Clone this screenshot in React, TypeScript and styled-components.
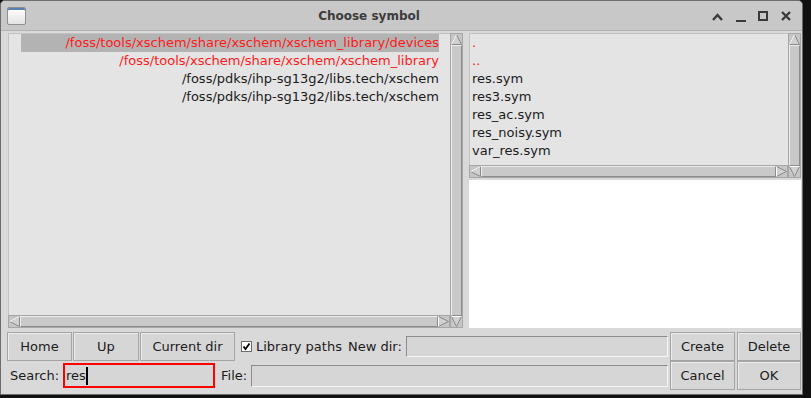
import React from "react";
import styled, { createGlobalStyle } from "styled-components";

const GlobalStyle = createGlobalStyle`
  html, body {
    margin: 0;
    padding: 0;
    background: #111111;
  }
  body {
    font-family: "DejaVu Sans", "Liberation Sans", sans-serif;
    font-size: 13px;
    color: #1b1b1b;
  }
`;

const Window = styled.div`
  width: 803px;
  height: 395px;
  box-sizing: border-box;
  border: 1px solid #6c6c6c;
  border-radius: 5px 5px 0 0;
  background: #d9d9d9;
  display: flex;
  flex-direction: column;
  overflow: hidden;
`;

const TitleBar = styled.div`
  flex: 0 0 29px;
  background: #c8c8c8;
  border-bottom: 1px solid #b2b2b2;
  display: flex;
  align-items: center;
  padding: 0 4px 0 6px;
`;

const AppIcon = styled.div`
  width: 17px;
  height: 16px;
  border: 1px solid #8e8e8e;
  border-radius: 2px;
  background: linear-gradient(#ffffff, #e3e3e3);
  box-shadow: inset 0 2px 0 #5a7fb5, inset 0 3px 0 #ffffff;
`;

const Title = styled.div`
  flex: 1;
  text-align: center;
  font-weight: bold;
  font-size: 12px;
  color: #3c3c3c;
  padding-left: 6px;
`;

const Controls = styled.div`
  display: flex;
  align-items: center;
`;

const ControlButton = styled.svg`
  width: 23px;
  height: 14px;
  display: block;
`;

const Body = styled.div`
  flex: 1;
  display: flex;
  flex-direction: column;
  padding: 2px 1px 4px 7px;
  background: #d9d9d9;
`;

const Panes = styled.div`
  height: 295px;
  display: flex;
  gap: 6px;
`;

const ScrolledPane = styled.div<{ $width?: number; $height?: number }>`
  display: grid;
  grid-template-columns: 1fr 13px;
  grid-template-rows: 1fr 13px;
  width: ${(p) => (p.$width ? `${p.$width}px` : "auto")};
  height: ${(p) => (p.$height ? `${p.$height}px` : "100%")};
`;

const ListBox = styled.div<{ $padLeft: number; $padRight: number }>`
  grid-column: 1;
  grid-row: 1;
  background: #e4e4e4;
  border: 1px solid #c2c2c2;
  border-right: none;
  border-bottom: none;
  padding: 0 ${(p) => p.$padRight}px 0 ${(p) => p.$padLeft}px;
  overflow: hidden;
`;

const Row = styled.div<{ $selected?: boolean; $red?: boolean; $right?: boolean }>`
  height: 18px;
  line-height: 18px;
  white-space: nowrap;
  text-align: ${(p) => (p.$right ? "right" : "left")};
  color: ${(p) => (p.$red ? "#ff1a1a" : "#1b1b1b")};
  background: ${(p) => (p.$selected ? "#b3b3b3" : "transparent")};
`;

const ScrollTrack = styled.div<{ $vertical?: boolean }>`
  grid-column: ${(p) => (p.$vertical ? "2" : "1")};
  grid-row: ${(p) => (p.$vertical ? "1 / 3" : "2")};
  background: #c6c6c6;
  border: 1px solid #a6a6a6;
  display: flex;
  flex-direction: ${(p) => (p.$vertical ? "column" : "row")};
  box-sizing: border-box;
`;

const Thumb = styled.div`
  flex: 1;
  border: 1px solid;
  border-color: #ededed #8c8c8c #8c8c8c #ededed;
  background: #c9c9c9;
`;

const ArrowSvg = styled.svg`
  flex: 0 0 11px;
  width: 11px;
  height: 11px;
  display: block;
`;

const RightPane = styled.div`
  flex: 1;
  display: flex;
  flex-direction: column;
  gap: 2px;
`;

const Preview = styled.div`
  flex: 1;
  background: #ffffff;
`;

const Bottom = styled.div`
  margin-top: 4px;
  display: flex;
`;

const ControlRows = styled.div`
  flex: 1;
  display: flex;
  flex-direction: column;
`;

const ControlRow = styled.div`
  height: 29px;
  display: flex;
  align-items: center;
`;

const Button = styled.div<{ $width: number }>`
  width: ${(p) => p.$width}px;
  height: 29px;
  box-sizing: border-box;
  border: 1px solid #a4a4a4;
  box-shadow: inset 1px 1px 0 #ececec;
  background: #d6d6d6;
  display: flex;
  align-items: center;
  justify-content: center;
  color: #1b1b1b;
`;

const ButtonGroup = styled.div`
  display: flex;
  gap: 1px;
  margin-left: -1px;
`;

const Label = styled.span<{ $gap?: number }>`
  margin-left: ${(p) => p.$gap ?? 0}px;
  margin-right: 4px;
  white-space: nowrap;
`;

const Entry = styled.div<{ $width?: number; $height?: number; $alert?: boolean }>`
  ${(p) => (p.$width ? `width: ${p.$width}px;` : "flex: 1;")}
  height: ${(p) => p.$height ?? 21}px;
  box-sizing: border-box;
  background: #d6d6d6;
  border: ${(p) => (p.$alert ? "2px solid #ff0000" : "1px solid")};
  border-color: ${(p) => (p.$alert ? "#ff0000" : "#8c8c8c #f4f4f4 #f4f4f4 #8c8c8c")};
  display: flex;
  align-items: center;
  padding-left: 1px;
`;

const Caret = styled.span`
  display: inline-block;
  width: 2px;
  height: 18px;
  background: #000000;
`;

const CheckBox = styled.svg`
  width: 11px;
  height: 11px;
  display: block;
  margin: 0 4px 0 6px;
`;

const ActionGrid = styled.div`
  margin-left: 2px;
  display: grid;
  grid-template-columns: 65px 64px;
  grid-template-rows: 29px 29px;
  column-gap: 2px;
`;

type Dir = "up" | "down" | "left" | "right";

const arrowPoints: Record<Dir, string> = {
  up: "5.5,0.5 0.5,10.5 10.5,10.5",
  down: "0.5,0.5 10.5,0.5 5.5,10.5",
  left: "0.5,5.5 10.5,0.5 10.5,10.5",
  right: "0.5,0.5 10.5,5.5 0.5,10.5",
};

const Arrow: React.FC<{ dir: Dir }> = ({ dir }) => (
  <ArrowSvg viewBox="0 0 11 11">
    <polygon points={arrowPoints[dir]} fill="#d0d0d0" stroke="#8a8a8a" strokeWidth="1" />
    {dir === "up" && <line x1="5.5" y1="0.5" x2="0.5" y2="10.5" stroke="#ffffff" />}
    {dir === "down" && <line x1="0.5" y1="0.5" x2="10.5" y2="0.5" stroke="#ffffff" />}
    {dir === "left" && <line x1="0.5" y1="5.5" x2="10.5" y2="0.5" stroke="#ffffff" />}
    {dir === "right" && <line x1="0.5" y1="0.5" x2="0.5" y2="10.5" stroke="#ffffff" />}
  </ArrowSvg>
);

const Scrollbar: React.FC<{ vertical?: boolean }> = ({ vertical }) => (
  <ScrollTrack $vertical={vertical}>
    <Arrow dir={vertical ? "up" : "left"} />
    <Thumb />
    <Arrow dir={vertical ? "down" : "right"} />
  </ScrollTrack>
);

const libraryDirs = [
  { path: "/foss/tools/xschem/share/xschem/xschem_library/devices", red: true, selected: true },
  { path: "/foss/tools/xschem/share/xschem/xschem_library", red: true },
  { path: "/foss/pdks/ihp-sg13g2/libs.tech/xschem" },
  { path: "/foss/pdks/ihp-sg13g2/libs.tech/xschem" },
];

const files = [
  { name: ".", red: true },
  { name: "..", red: true },
  { name: "res.sym" },
  { name: "res3.sym" },
  { name: "res_ac.sym" },
  { name: "res_noisy.sym" },
  { name: "var_res.sym" },
];

export default function App() {
  return (
    <>
      <GlobalStyle />
      <Window>
        <TitleBar>
          <AppIcon />
          <Title>Choose symbol</Title>
          <Controls>
            <ControlButton viewBox="0 0 23 14">
              <polyline points="7,11 11.5,6 16,11" fill="none" stroke="#3a3a3a" strokeWidth="2.4" />
            </ControlButton>
            <ControlButton viewBox="0 0 23 14">
              <line x1="7" y1="12" x2="17" y2="12" stroke="#3a3a3a" strokeWidth="2.2" />
            </ControlButton>
            <ControlButton viewBox="0 0 23 14">
              <rect x="7" y="3" width="8" height="8" fill="none" stroke="#3a3a3a" strokeWidth="2" />
            </ControlButton>
            <ControlButton viewBox="0 0 23 14">
              <path d="M7 3 L15 11 M15 3 L7 11" stroke="#3a3a3a" strokeWidth="2.4" />
            </ControlButton>
          </Controls>
        </TitleBar>
        <Body>
          <Panes>
            <ScrolledPane $width={455}>
              <ListBox $padLeft={12} $padRight={11}>
                {libraryDirs.map((d, i) => (
                  <Row key={i} $right $red={d.red} $selected={d.selected}>
                    {d.path}
                  </Row>
                ))}
              </ListBox>
              <Scrollbar vertical />
              <Scrollbar />
            </ScrolledPane>
            <RightPane>
              <ScrolledPane $height={145}>
                <ListBox $padLeft={2} $padRight={0}>
                  {files.map((f, i) => (
                    <Row key={i} $red={f.red}>
                      {f.name}
                    </Row>
                  ))}
                </ListBox>
                <Scrollbar vertical />
                <Scrollbar />
              </ScrolledPane>
              <Preview />
            </RightPane>
          </Panes>
          <Bottom>
            <ControlRows>
              <ControlRow>
                <ButtonGroup>
                  <Button $width={65}>Home</Button>
                  <Button $width={66}>Up</Button>
                  <Button $width={95}>Current dir</Button>
                </ButtonGroup>
                <CheckBox viewBox="0 0 11 11">
                  <rect x="0.5" y="0.5" width="10" height="10" fill="#ffffff" stroke="#6a6a6a" />
                  <polyline points="2.5,5.5 4.5,8 8.5,2.5" fill="none" stroke="#000000" strokeWidth="1.8" />
                </CheckBox>
                <Label>Library paths</Label>
                <Label $gap={2}>New dir:</Label>
                <Entry $height={21}></Entry>
              </ControlRow>
              <ControlRow>
                <Label $gap={2}>Search:</Label>
                <Entry $width={152} $height={25} $alert>
                  res
                  <Caret />
                </Entry>
                <Label $gap={6}>File:</Label>
                <Entry $height={22}></Entry>
              </ControlRow>
            </ControlRows>
            <ActionGrid>
              <Button $width={65}>Create</Button>
              <Button $width={64}>Delete</Button>
              <Button $width={65}>Cancel</Button>
              <Button $width={64}>OK</Button>
            </ActionGrid>
          </Bottom>
        </Body>
      </Window>
    </>
  );
}
